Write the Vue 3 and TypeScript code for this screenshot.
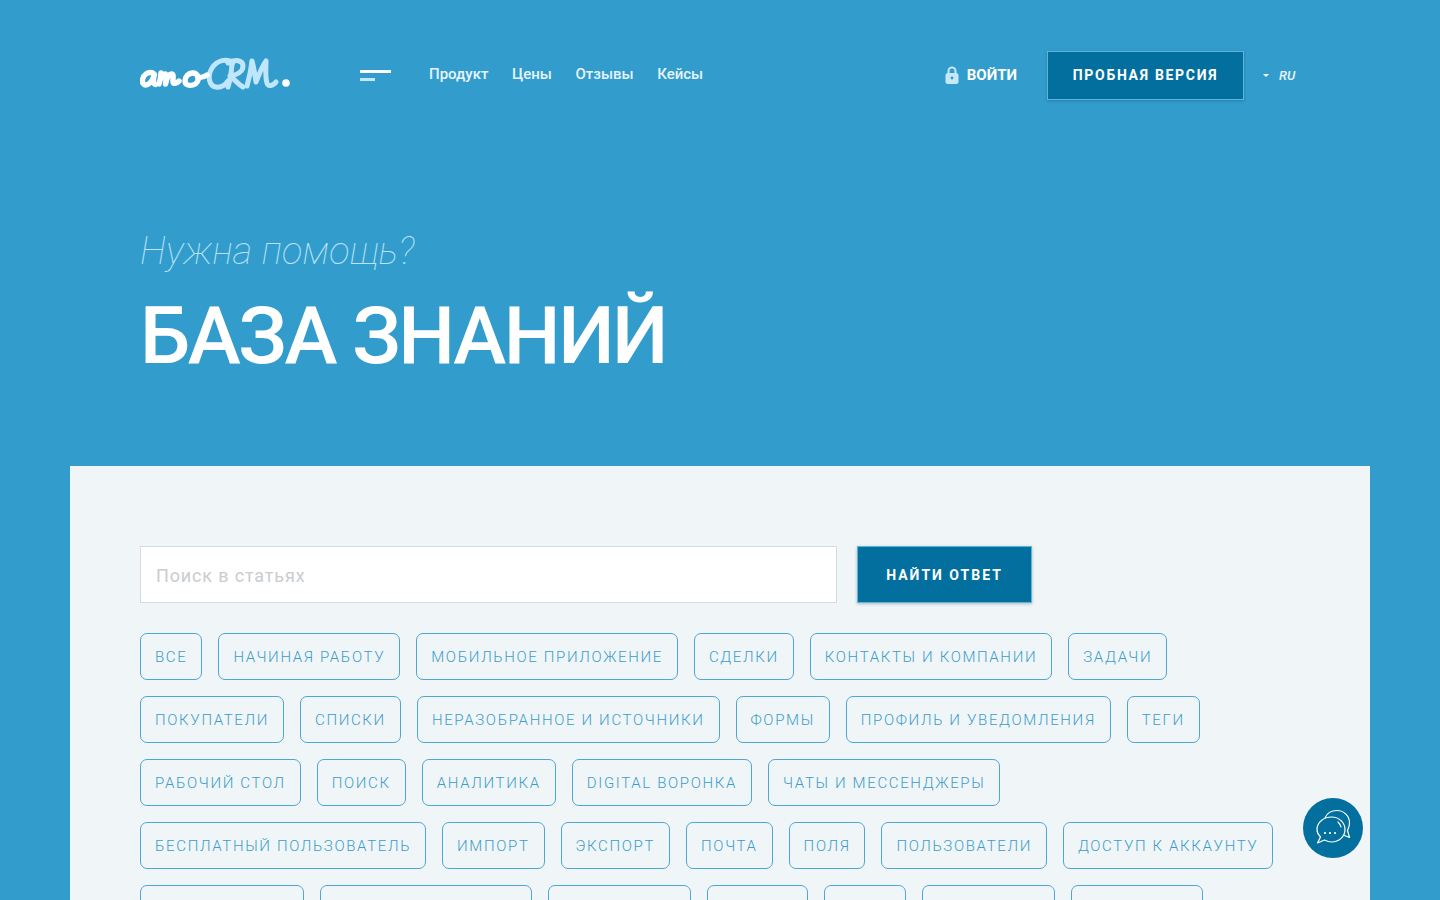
<template>
  <div class="page">
    <header class="top-bar">
      <a class="logo" href="#" aria-label="amoCRM">
        <svg width="152" height="44" viewBox="140 52 152 44" fill="none" stroke-linecap="round" stroke-linejoin="round">
          <g stroke="#bfe6fb" stroke-width="5">
            <path d="M233 61c-6-5-16-3-21 5-5 8-3 18 4 19 5 1 9-2 12-6" />
            <path d="M232 59c0 9-2 19-4 26M228 61c7-4 15-3 15 3 0 6-7 9-13 10 4 3 8 8 13 11" />
            <path d="M252 59c-1 9-3 18-5 25M252 59c2 7 3 15 4 21 3-7 6-16 10-21 0 8-1 16 1 22 1 4 6 3 9-1" />
          </g>
          <g stroke="#fff" stroke-width="5.4">
            <path d="M153 71c-5-2-10 2-10.500 7-.5 5 3 6 6 4 3-2 5-6 6-9.500-1 3-2 9 1 10" />
            <path d="M161 71c0 4-1 7-2 11 1-4 3-10 6-10 2 0 1 6 .5 10 1-4 3-10 6-10 3 0 1 6 1.500 8 .5 2 3 2 6-1" />
            <path d="M193 71c-5 0-8 4-8 8 0 4 4 5 8 4 4-1 6-5 5-8-1-3-3-4-5-4z" />
            <path d="M198 75c3 1 6 0 9-2" />
          </g>
          <circle cx="286" cy="81" r="3.800" fill="#fff" />
        </svg>
      </a>
      <button class="burger" aria-label="Меню">
        <span class="burger-long"></span>
        <span class="burger-short"></span>
      </button>
      <nav class="main-nav">
        <a v-for="item in navItems" :key="item" href="#">{{ item }}</a>
      </nav>
      <a class="login" href="#">
        <svg width="14" height="18" viewBox="0 0 14 18">
          <path d="M3.500 8V5a3.500 3.500 0 0 1 7 0v3" fill="none" stroke="#c5e7f8" stroke-width="2" />
          <rect x="0.5" y="7" width="13" height="11" rx="2.5" fill="#c5e7f8" />
          <circle cx="7" cy="12" r="1.4" fill="#329dcc" />
        </svg>
        ВОЙТИ
      </a>
      <button class="trial-btn">ПРОБНАЯ ВЕРСИЯ</button>
      <div class="lang">
        <span class="lang-arrow"></span>
        <span>RU</span>
      </div>
    </header>

    <section class="hero">
      <p class="hero-sub">Нужна помощь?</p>
      <h1 class="hero-title">БАЗА ЗНАНИЙ</h1>
    </section>

    <main class="panel">
      <form class="search" @submit.prevent>
        <input class="search-input" type="text" placeholder="Поиск в статьях" />
        <button class="search-btn">НАЙТИ ОТВЕТ</button>
      </form>
      <div class="tags">
        <a v-for="tag in tags" :key="tag" class="tag" href="#">{{ tag }}</a>
      </div>
    </main>

    <button class="chat-btn" aria-label="Чат">
      <svg width="38" height="38" viewBox="0 0 38 38" fill="none" stroke="#fff" stroke-width="1.2" stroke-linejoin="round" stroke-linecap="round">
        <path d="M3.500 34l3-6C4 25.500 3 23 3 20.500 3 13 10 8 17.500 8 25 8 31 13.500 31 20.500 31 27.500 25 33 17.500 33c-3 0-5-1-7-2z" />
        <path d="M11 9c2-5 7-7.500 12-7.500 7 0 12.500 5.500 12.500 12.500 0 3.500-1.500 6-2 7.500l2 7-5-2" />
        <path d="M24 13c1.500 1.500 2.500 3 3 5" />
        <circle cx="11" cy="24" r="0.5" />
        <circle cx="16" cy="24" r="0.5" />
        <circle cx="21" cy="24" r="0.5" />
      </svg>
    </button>
  </div>
</template>

<script setup lang="ts">
const navItems: string[] = ['Продукт', 'Цены', 'Отзывы', 'Кейсы']

const tags: string[] = [
  'ВСЕ',
  'НАЧИНАЯ РАБОТУ',
  'МОБИЛЬНОЕ ПРИЛОЖЕНИЕ',
  'СДЕЛКИ',
  'КОНТАКТЫ И КОМПАНИИ',
  'ЗАДАЧИ',
  'ПОКУПАТЕЛИ',
  'СПИСКИ',
  'НЕРАЗОБРАННОЕ И ИСТОЧНИКИ',
  'ФОРМЫ',
  'ПРОФИЛЬ И УВЕДОМЛЕНИЯ',
  'ТЕГИ',
  'РАБОЧИЙ СТОЛ',
  'ПОИСК',
  'АНАЛИТИКА',
  'DIGITAL ВОРОНКА',
  'ЧАТЫ И МЕССЕНДЖЕРЫ',
  'БЕСПЛАТНЫЙ ПОЛЬЗОВАТЕЛЬ',
  'ИМПОРТ',
  'ЭКСПОРТ',
  'ПОЧТА',
  'ПОЛЯ',
  'ПОЛЬЗОВАТЕЛИ',
  'ДОСТУП К АККАУНТУ',
  'АВТОДЕЙСТВИЯ',
  'ЦИФРОВЫЕ ВОРОНКИ',
  'ИНТЕГРАЦИИ',
  'ТАРИФЫ',
  'ЛИДЫ',
  'РЕКВИЗИТЫ',
  'ИНТЕРФЕЙС'
]
</script>

<style>
html,
body {
  height: 900px;
  overflow: hidden;
  background: #329dcc;
}
</style>

<style scoped>
.page {
  font-family: Roboto, "Liberation Sans", sans-serif;
  color: #fff;
}

a {
  text-decoration: none;
}

button {
  font-family: inherit;
  cursor: pointer;
}

.top-bar {
  display: flex;
  align-items: center;
  height: 49px;
  padding: 51px 140px 0;
}

.logo {
  display: block;
  width: 152px;
  height: 44px;
  margin-right: 68px;
}

.burger {
  display: flex;
  flex-direction: column;
  gap: 5px;
  width: 31px;
  padding: 0;
  margin-right: 38px;
  background: none;
  border: 0;
}

.burger span {
  display: block;
  height: 3px;
}

.burger-long {
  width: 31px;
  background: #fff;
}

.burger-short {
  width: 15px;
  background: #c5e7f8;
}

.main-nav {
  display: flex;
  gap: 23.6px;
  padding-bottom: 3px;
  font-size: 15px;
  font-weight: 500;
}

.main-nav a {
  color: #e6f4fb;
}

.login {
  display: flex;
  align-items: center;
  gap: 8px;
  margin-left: auto;
  margin-right: 30px;
  padding-bottom: 2px;
  color: #fff;
  font-size: 15px;
  font-weight: 700;
}

.trial-btn {
  width: 197px;
  height: 49px;
  padding-bottom: 2px;
  color: #fff;
  font-size: 14px;
  font-weight: 700;
  letter-spacing: 1.7px;
  background: #026f9f;
  border: 1px solid #5fb4da;
  box-shadow: 0 1px 3px rgba(0, 0, 0, 0.2);
}

.lang {
  display: flex;
  align-items: center;
  gap: 10px;
  box-sizing: border-box;
  width: 38px;
  margin-left: 18px;
  padding-left: 1px;
  font-size: 13px;
  font-style: italic;
  font-weight: 500;
  color: #e6f4fb;
}

.lang-arrow {
  flex: none;
  width: 0;
  height: 0;
  border: 3px solid transparent;
  border-top-color: #fff;
  border-bottom-width: 0;
}

.hero {
  height: 366px;
  padding: 129px 140px 0;
  box-sizing: border-box;
}

.hero-sub {
  margin: 0;
  font-size: 38px;
  line-height: 45px;
  font-style: italic;
  font-weight: 100;
  letter-spacing: 0.2px;
  color: #bde3f6;
}

.hero-title {
  margin: 14px 0 0;
  font-size: 80px;
  line-height: 96px;
  font-weight: 500;
  letter-spacing: -2.5px;
  white-space: nowrap;
}

.panel {
  margin: 0 70px;
  padding: 80px 70px 60px;
  background: #f0f5f7;
}

.search {
  display: flex;
  gap: 20px;
  margin-bottom: 30px;
}

.search-input {
  box-sizing: border-box;
  width: 697px;
  height: 57px;
  padding: 2px 15px 0;
  font-family: inherit;
  font-size: 18px;
  letter-spacing: 0.85px;
  color: #333;
  background: #fff;
  border: 1px solid #d4dbe3;
  outline: none;
}

.search-input::placeholder {
  color: #c8cdd0;
  opacity: 1;
}

.search-btn {
  width: 175px;
  height: 57px;
  color: #fff;
  font-size: 14px;
  font-weight: 700;
  letter-spacing: 2px;
  background: #026f9f;
  border: 1px solid #5fb4da;
  box-shadow: 0 1px 3px rgba(0, 0, 0, 0.25);
}

.tags {
  display: flex;
  flex-wrap: wrap;
  gap: 16px;
  max-width: 1135px;
}

.tag {
  box-sizing: border-box;
  height: 47px;
  padding: 0 14px;
  font-size: 15px;
  font-weight: 300;
  line-height: 47px;
  letter-spacing: 1.65px;
  color: #3c9dcb;
  white-space: nowrap;
  border: 1px solid #4fa6d2;
  border-radius: 7px;
}

.chat-btn {
  position: fixed;
  left: 1303px;
  top: 798px;
  display: flex;
  align-items: center;
  justify-content: center;
  width: 60px;
  height: 60px;
  padding: 0;
  background: #026f9f;
  border: 0;
  border-radius: 50%;
}
</style>
